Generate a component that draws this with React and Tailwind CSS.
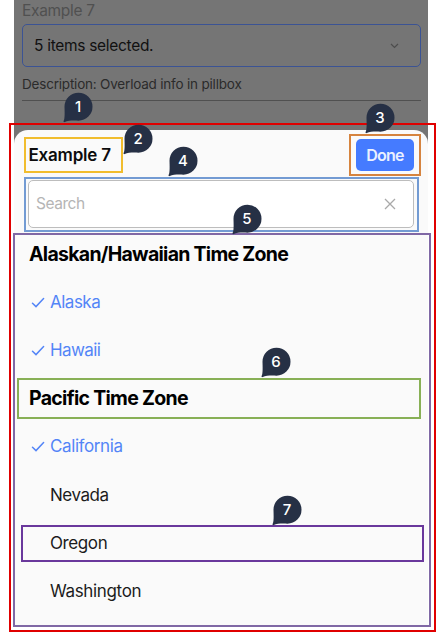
const groups = [
  {
    label: 'Alaskan/Hawaiian Time Zone',
    tracking: 'tracking-[-0.72px]',
    items: [
      { name: 'Alaska', selected: true, tracking: 'tracking-[-0.5px]' },
      { name: 'Hawaii', selected: true, tracking: 'tracking-[-0.6px]' },
    ],
  },
  {
    label: 'Pacific Time Zone',
    tracking: 'tracking-[-0.7px]',
    items: [
      { name: 'California', selected: true, tracking: 'tracking-[-0.4px]' },
      { name: 'Nevada', tracking: 'tracking-[-0.45px]' },
      { name: 'Oregon', tracking: 'tracking-[-0.4px]' },
      { name: 'Washington', tracking: 'tracking-[-0.35px]' },
    ],
  },
];

const outlines = [
  'left-[9px] top-[123px] w-[427px] h-[509px] border-[#e00000]',
  'left-[24px] top-[137px] w-[99px] h-[36px] border-[#f1bd2e]',
  'left-[349px] top-[134px] w-[72px] h-[42px] border-[#d6843f]',
  'left-[24px] top-[177px] w-[395px] h-[55px] border-[#739bd3]',
  'left-[13px] top-[233px] w-[418px] h-[394px] border-[#8068a5]',
  'left-[17px] top-[378px] w-[404px] h-[41px] border-[#88b056]',
  'left-[21px] top-[525px] w-[403px] h-[37px] border-[#6a389c]',
];

const markers = [
  { n: 1, at: 'left-[63px] top-[92px]' },
  { n: 2, at: 'left-[123px] top-[124px]' },
  { n: 3, at: 'left-[365px] top-[103px]' },
  { n: 4, at: 'left-[168px] top-[146px]' },
  { n: 5, at: 'left-[232px] top-[204px]' },
  { n: 6, at: 'left-[261px] top-[347px]' },
  { n: 7, at: 'left-[272px] top-[495px]' },
];

function Marker({ n, at }) {
  return (
    <div className={`absolute ${at} h-[31px] w-[31px]`}>
      <svg className="absolute inset-0" width="31" height="31" viewBox="0 0 31 31">
        <path
          d="M1.5 14.7A14 14 0 1 1 15.5 28.7C10 28.3 5 28.6 1.8 30.1C0.8 30.5 0.2 29.7 0.7 28.8C2 26 1.6 20 1.5 14.7Z"
          fill="#263045"
        />
      </svg>
      <span className="absolute left-[1px] top-px flex h-[29px] w-[28px] items-center justify-center text-[15px] font-medium text-white">
        {n}
      </span>
    </div>
  );
}

function Option({ name, selected, tracking }) {
  return (
    <li className={`flex h-[48.2px] items-center pl-[17px] text-[17px] ${tracking} ${selected ? 'text-[#5385f7]' : 'text-[#1c1c1c]'}`}>
      <span className="w-[19px]">
        {selected && (
          <svg width="14" height="12" viewBox="0 0 14 12" fill="none" stroke="currentColor" strokeWidth="1.5" strokeLinecap="round">
            <path d="M1.5 6.2L5 9.6L12.6 1.6" />
          </svg>
        )}
      </span>
      {name}
    </li>
  );
}

export default function App() {
  return (
    <main className="relative h-[638px] w-[444px] overflow-hidden bg-white font-['Inter',sans-serif]">
      <div className="ml-[14px] flex h-[626px] w-[414px] flex-col bg-[#757575]">
        <section className="h-[130px] shrink-0 pl-2 pr-[7px]">
          <div className="h-6 pt-px text-[15.5px] leading-[19px] tracking-[-0.3px] text-[#505050]">Example 7</div>
          <div className="flex h-[43px] items-center justify-between rounded-[5px] border border-[#3b5394] pl-[11px] pr-[21px] text-[15.5px] tracking-[-0.3px] text-[#111]">
            <span className="pt-px">5 items selected.</span>
            <svg width="9" height="6" viewBox="0 0 9 6" fill="none" stroke="#4d4d4d" strokeWidth="1.2">
              <path d="M1 1L4.5 4.5L8 1" />
            </svg>
          </div>
          <div className="flex h-[34px] items-center border-b border-[#505050] pt-[1px] text-[13.5px] tracking-[-0.2px] text-[#2b2b2b]">
            Description: Overload info in pillbox
          </div>
        </section>

        <section className="flex-1 rounded-t-[14px] bg-[#fafafa]">
          <header className="flex h-[50px] items-start justify-between pl-[14.5px] pr-[14px] pt-[9px]">
            <h1 className="pt-[3px] text-[17px] font-semibold leading-[27px] tracking-[-0.2px] text-[#0c0c0c]">Example 7</h1>
            <button className="h-[32px] w-[58px] rounded-[5px] bg-[#457bff] text-[16px] font-semibold tracking-[-0.7px] text-[#eaf1ff]">Done</button>
          </header>
          <div className="mx-[14px] flex h-12 items-center justify-between rounded-[5px] border border-[#bdbdbd] bg-white pl-[7px] pr-[17px] text-[15.5px] tracking-[-0.45px] text-[#b5b5b5]">
            <span>Search</span>
            <svg width="12" height="12" viewBox="0 0 12 12" fill="none" stroke="#a9a9a9" strokeWidth="1.3">
              <path d="M1 1L11 11M11 1L1 11" />
            </svg>
          </div>
          <div className="pt-[2.4px]">
            {groups.map((group) => (
              <div key={group.label}>
                <h2 className={`flex h-[48.2px] items-center pl-[15px] text-[19.5px] font-bold text-black ${group.tracking}`}>{group.label}</h2>
                <ul>
                  {group.items.map((item) => (
                    <Option key={item.name} {...item} />
                  ))}
                </ul>
              </div>
            ))}
          </div>
        </section>
      </div>

      {outlines.map((box) => (
        <div key={box} className={`absolute border-2 ${box}`} />
      ))}
      {markers.map((marker) => (
        <Marker key={marker.n} {...marker} />
      ))}
    </main>
  );
}
